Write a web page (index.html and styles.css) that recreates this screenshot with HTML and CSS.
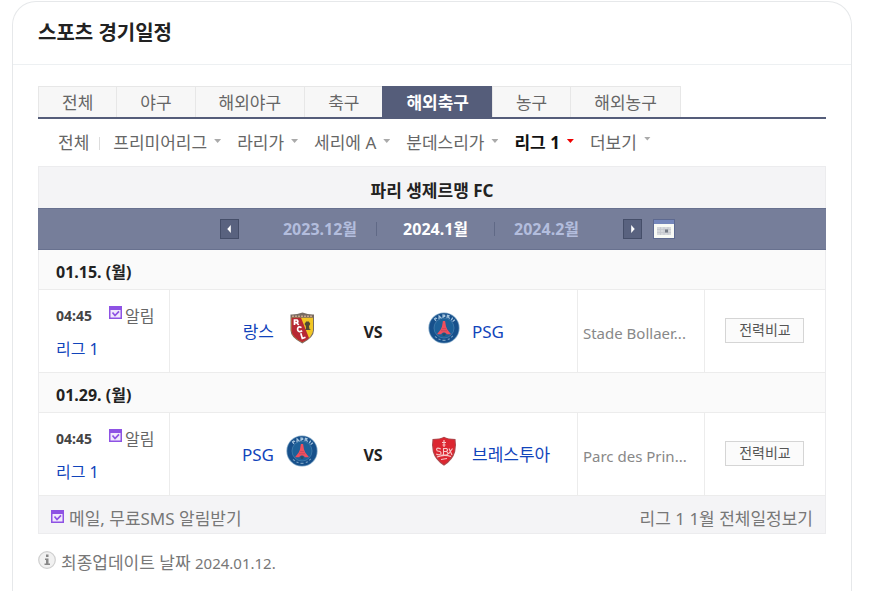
FILE: index.html
```html
<!DOCTYPE html>
<html lang="ko">
<head>
<meta charset="utf-8">
<title>스포츠 경기일정</title>
<link rel="stylesheet" href="styles.css">
</head>
<body>
<svg class="defs" aria-hidden="true">
  <symbol id="psg" viewBox="0 0 32 32">
    <circle cx="16" cy="16" r="15.6" fill="#7fa6c6"/>
    <circle cx="16" cy="16" r="14.8" fill="#17508b"/>
    <circle cx="16" cy="16" r="10" fill="#1d6098" stroke="#4b83b0" stroke-width=".7"/>
    <path d="M8 8.800l-1.500-2 1.300-.9 1.200 1M11 7.200l.1-3.200 2.400 2.400M15 6V3l1.700.2v1.300H15M19 6l.4-2.800 1.600.5-.6 1.300 1.200 1.600M23.200 8.200l1.500-2.600M24.600 9.600l2.200-1.900" fill="none" stroke="#a9c8e0" stroke-width="1.200"/>
    <path d="M14.900 9h2.200l.9 5.600 1.300 3 3.700 4.600h-4.300c-.5-2.400-4.900-2.400-5.400 0H9l3.700-4.600 1.300-3z" fill="#f04f5e"/>
    <path d="M14.200 16.500h3.600M13 18.700h6" stroke="#b3445e" stroke-width=".6"/>
    <circle cx="16" cy="22.500" r="1.500" fill="#274d67"/>
    <path d="M7 24.500l2 1.400M10.500 27l2 .8M14.500 28.400h3M19.800 27.600l2-.9M23.300 25.400l1.500-1.500" stroke="#799fc0" stroke-width="1.100"/>
  </symbol>
  <symbol id="rcl" viewBox="0 0 32 32">
    <path d="M4.500 2.500Q10.500 2.800 16.500.6q6 2.200 11.500 1.900v15.800q0 7.200-11.700 13.200Q4.500 25.500 4.500 18.300z" fill="#776b62"/>
    <path d="M5.500 5.700h21.500v12.600q0 6.600-10.700 12Q5.500 25 5.500 18.300z" fill="#f2c624"/>
    <path d="M5.500 5.700h9.500L23 26q-2.700 2.700-6.700 4.300Q5.500 25 5.500 18.300z" fill="#b72934"/>
    <path d="M6 4.200h21" stroke="#c7a58f" stroke-width="1.500" stroke-dasharray="2 1"/>
    <path d="M8.500 13V8h2.600q1.600 1.500 0 2.700H8.700m2 0 2 2.300M15.500 15.600q-3-1.900-3.800.7-.5 3 2 3.400 1.400 0 2.400-1M14.800 21.300l1.500 5.200 3.200-1.200" fill="none" stroke="#fff" stroke-width="1.700"/>
    <path d="M20.200 9.500h2.600l1.500 2.300-1.300 2.500.5 2.700 1.500 1h-6l1-1.200-.2-2.800-1.300-2z" fill="#514a35"/>
  </symbol>
  <symbol id="brest" viewBox="0 0 32 32">
    <path d="M16 1.800q4 2.200 11.500 2.300 1.200 5.700-.3 12.600Q25 25 16 30.800 7 25 4.800 16.700 3.300 9.800 4.500 4.100 12 4 16 1.800z" fill="#a94c50"/>
    <path d="M16 2.800q4.200 2 10.600 2.200 1 5.300-.4 11.300Q24 24 16 29.600 8 24 5.800 16.300 4.400 10.300 5.400 5 11.800 4.800 16 2.800z" fill="#dc2630"/>
    <path d="M16 5v7M14 7.500h4M14.500 10h3M12.800 14q-4-2-4.200.4 0 1.600 2.300 1.900 2.500.3 2 2.200-1 2.300-4.700.5M15.500 20v-6.500h3q2.200 1.700-.3 3h-2.500m2.500 0q3.300 1.500.5 3.500h-5.500M21 13.500l3 6.500M20.500 19l4-5.500M9 22q7-3 14-.5M13 24.500l6-1" fill="none" stroke="#f7c9c9" stroke-width="1.100"/>
  </symbol>
  <symbol id="alarm" viewBox="0 0 13 13">
    <path d="M0 0h13v13H0z" fill="#8e52e4"/>
    <path d="M1.500 4h10v7.500h-10z" fill="#f1e9fc"/>
    <path d="M3.500 6.500l2.500 3 4-4.200" fill="none" stroke="#8e52e4" stroke-width="1.700"/>
  </symbol>
</svg>

<section class="card">
  <h1 class="card-title">스포츠 경기일정</h1>
  <div class="card-body">
    <nav class="tabs">
      <a href="#">전체</a><a href="#">야구</a><a href="#">해외야구</a><a href="#">축구</a><a href="#" class="on" aria-current="page">해외축구</a><a href="#">농구</a><a href="#">해외농구</a>
    </nav>
    <nav class="leagues">
      <a href="#" class="all">전체</a>
      <a href="#" class="drop">프리미어리그</a>
      <a href="#" class="drop">라리가</a>
      <a href="#" class="drop">세리에 A</a>
      <a href="#" class="drop">분데스리가</a>
      <a href="#" class="drop on">리그 1</a>
      <a href="#" class="drop more">더보기</a>
    </nav>

    <div class="schedule">
      <h2 class="team-title">파리 생제르맹 FC</h2>
      <div class="month-bar">
        <div class="month-nav">
          <button class="step" type="button" aria-label="이전 달"><svg viewBox="0 0 19 20"><path d="M11 5.500v9L7 10z" fill="#fff"/></svg></button>
          <ul class="months">
            <li><a href="#">2023.12월</a></li>
            <li class="now"><a href="#">2024.1월</a></li>
            <li><a href="#">2024.2월</a></li>
          </ul>
          <button class="step" type="button" aria-label="다음 달"><svg viewBox="0 0 19 20"><path d="M8 5.500v9l4-4.500z" fill="#fff"/></svg></button>
        </div>
        <button class="calendar" type="button" aria-label="달력">
          <svg viewBox="0 0 22 20"><path d="M0 0h22v20H0z" fill="#5d6990"/><path d="M1 1h20v4H1z" fill="#7486bb"/><path d="M1 5h20v14H1z" fill="#f8faf5"/><path d="M4 8h14v8H4z" fill="#d5d8dc"/><path d="M4 10.500h14M4 13.500h14M7.500 8v8M11 8v8M15 8v8" stroke="#c3c6cd" stroke-width=".8"/><path d="M12 10.500h3v3h-3z" fill="#747b85"/></svg>
        </button>
      </div>
      <table class="games">
        <colgroup><col class="c-time"><col><col class="c-place"><col class="c-compare"></colgroup>
        <tbody>
          <tr class="day"><th colspan="4" scope="rowgroup">01.15. (월)</th></tr>
          <tr class="game">
            <td class="when"><div class="when-top"><time>04:45</time><a href="#" class="alarm"><svg><use href="#alarm"/></svg>알림</a></div><a href="#" class="league">리그 1</a></td>
            <td><div class="match"><a href="#" class="home">랑스</a><svg class="logo"><use href="#rcl"/></svg><b>VS</b><svg class="logo"><use href="#psg"/></svg><a href="#">PSG</a></div></td>
            <td class="place">Stade Bollaer...</td>
            <td class="compare"><button type="button">전력비교</button></td>
          </tr>
        </tbody>
        <tbody>
          <tr class="day"><th colspan="4" scope="rowgroup">01.29. (월)</th></tr>
          <tr class="game">
            <td class="when"><div class="when-top"><time>04:45</time><a href="#" class="alarm"><svg><use href="#alarm"/></svg>알림</a></div><a href="#" class="league">리그 1</a></td>
            <td><div class="match"><a href="#" class="home">PSG</a><svg class="logo"><use href="#psg"/></svg><b>VS</b><svg class="logo"><use href="#brest"/></svg><a href="#">브레스투아</a></div></td>
            <td class="place">Parc des Prin...</td>
            <td class="compare"><button type="button">전력비교</button></td>
          </tr>
        </tbody>
      </table>
      <div class="links">
        <a href="#" class="alarm"><svg><use href="#alarm"/></svg>메일, 무료SMS 알림받기</a>
        <a href="#">리그 1 1월 전체일정보기</a>
      </div>
    </div>
    <p class="updated">
      <svg viewBox="0 0 18 18"><circle cx="9" cy="9" r="8.300" fill="#f1f1f1" stroke="#cfcfcf" stroke-width="1.200"/><path d="M8 3.500h2.500V6H8zM7 7.500h3.500v5H12V14H6.500v-1.500H8V9H7z" fill="#888"/></svg>
      <span>최종업데이트 날짜 <span class="num">2024.01.12.</span></span>
    </p>
  </div>
</section>
</body>
</html>
```
FILE: styles.css
```css
* { box-sizing: border-box; }
body {
  margin: 0;
  padding: 1px 24px 0 12px;
  background: #fff;
  color: #666;
  font: 17px/24px "Noto Sans", "Noto Sans CJK KR", sans-serif;
}
a { color: inherit; text-decoration: none; }
button { padding: 0; font: inherit; cursor: pointer; }
svg { display: block; flex: none; }
.defs { position: absolute; width: 0; height: 0; }

.card {
  min-height: calc(100vh - 1px);
  border: 1px solid #e6e8ea;
  border-bottom: 0;
  border-radius: 24px 24px 0 0;
}
.card-title {
  margin: 0;
  padding: 16px 25px 17px;
  border-bottom: 1px solid #edf0f2;
  color: #222;
  font-size: 20px;
  line-height: 29px;
}
.card-body { padding: 21px 25px 0; }

.tabs {
  display: flex;
  border-bottom: 2px solid #555d7a;
}
.tabs a {
  padding: 4px 23px 3px;
  border: solid #e7e7e7;
  border-width: 1px 0 0 1px;
  background: #f7f7f7;
  line-height: 23px;
}
.tabs a:last-child { border-right-width: 1px; }
.tabs a.on {
  border-color: #555d7a;
  background: #555d7a;
  color: #fff;
  font-weight: 700;
}

.leagues {
  display: flex;
  align-items: center;
  gap: 16px;
  padding: 12px 20px 11px;
}
.all { position: relative; margin-right: 8px; }
.all::after {
  content: "";
  position: absolute;
  top: 6px;
  right: -11px;
  width: 1px;
  height: 13px;
  background: #ddd;
}
.drop { display: flex; align-items: center; gap: 7px; }
.drop::after {
  content: "";
  width: 7px;
  height: 4px;
  margin-bottom: 4px;
  background: #aaa;
  clip-path: polygon(0 0, 100% 0, 50% 100%);
}
.drop.on { color: #111; font-weight: 700; }
.drop.on::after { background: #e00; }
.drop.more::after { margin-bottom: 9px; }

.schedule { border: 1px solid #ececee; }
.team-title {
  margin: 0;
  padding: 12px 0 5px;
  background: #f4f4f6;
  color: #222;
  font-size: 17px;
  line-height: 24px;
  text-align: center;
}
.month-bar {
  display: flex;
  justify-content: center;
  align-items: center;
  gap: 10px;
  height: 42px;
  margin: 0 -1px;
  padding-left: 30px;
  border: solid #68718f;
  border-width: 1px 0;
  background: #767e9a;
}
.month-nav {
  display: flex;
  justify-content: space-between;
  align-items: center;
  width: 423px;
}
.step {
  width: 19px;
  height: 20px;
  border: 1px solid #454e69;
  background: #59627f;
}
.step svg { width: 17px; height: 18px; }
.calendar { width: 22px; height: 20px; border: 0; background: none; }
.months {
  display: flex;
  align-items: center;
  margin: 0;
  padding: 0;
  list-style: none;
  color: #b3bddd;
  font-size: 16px;
  font-weight: 700;
  line-height: 14px;
}
.months .now {
  margin: 0 19px;
  padding: 0 26px;
  border: solid #606986;
  border-width: 0 1px;
  color: #fff;
}

.games {
  width: 100%;
  border-collapse: separate;
  border-spacing: 0;
  table-layout: fixed;
}
.c-time { width: 131px; }
.c-place { width: 127px; }
.c-compare { width: 120px; }
.day th {
  height: 40px;
  padding: 4px 17px 0;
  border-bottom: 1px solid #ececec;
  background: #fafafa;
  color: #222;
  font-size: 16px;
  text-align: left;
}
.game td {
  height: 83px;
  padding: 0;
  border-bottom: 1px solid #ececec;
  border-right: 1px solid #ececec;
}
.game td:last-child { border-right: 0; }
.game .when { padding: 2px 0 0 17px; }
.when-top { display: flex; align-items: center; gap: 17px; margin-bottom: 9px; }
time { color: #444; font-size: 14px; font-weight: 700; }
.alarm { display: flex; align-items: center; gap: 3px; }
.alarm svg { width: 13px; height: 13px; margin-bottom: 6px; }
.when .alarm, .league { font-size: 16px; }
.league, .match a { color: #14b; }
.match {
  display: grid;
  grid-template-columns: 104px 32px 86px 32px 1fr;
  align-items: center;
  column-gap: 12px;
}
.home { text-align: right; }
.match a, .match b { padding-top: 2px; }
.match b { color: #222; font-size: 16px; text-align: center; }
.logo { width: 32px; height: 32px; margin-bottom: 6px; }
.game .place { padding: 3px 0 0 5px; color: #888; font-size: 15px; }
.game .compare { padding-bottom: 2px; text-align: center; }
.compare button {
  width: 79px;
  height: 25px;
  border: 1px solid #d5d5d5;
  background: #fbfbfb;
  color: #555;
  font-size: 14px;
  line-height: 20px;
}

.links {
  display: flex;
  justify-content: space-between;
  padding: 11px 12px 2px;
  background: #f4f4f6;
  color: #777;
}
.links .alarm { gap: 5px; }

.updated {
  display: flex;
  gap: 5px;
  margin: 17px 0 0;
  color: #777;
}
.updated svg { width: 18px; height: 18px; }
.num { font-size: 15px; }
```
